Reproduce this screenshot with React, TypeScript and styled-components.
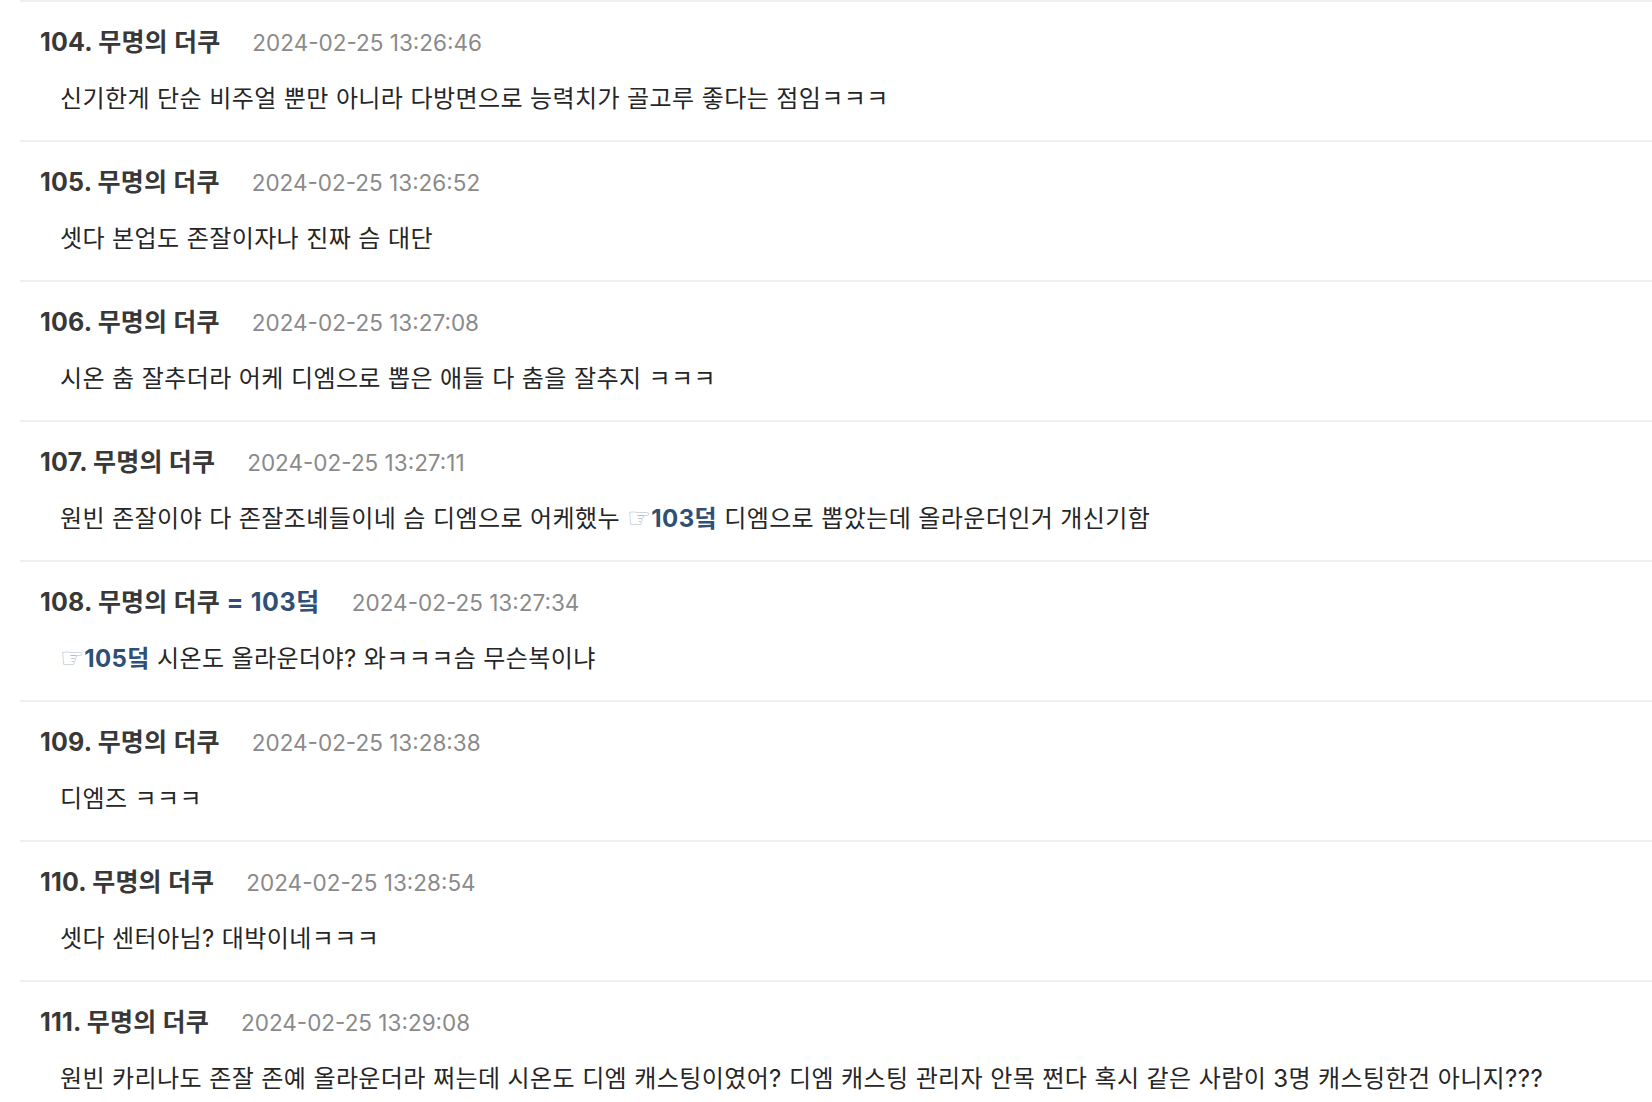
import React from "react";
import styled, { createGlobalStyle } from "styled-components";

const GlobalStyle = createGlobalStyle`
  html, body {
    margin: 0;
    padding: 0;
    background: #ffffff;
  }
  body {
    font-family: "Inter", "Noto Sans CJK KR", sans-serif;
    -webkit-font-smoothing: antialiased;
  }
`;

type Part = string | { ref: string };

interface Comment {
  no: number;
  author: string;
  replyTo?: string;
  time: string;
  body: Part[];
}

const COMMENTS: Comment[] = [
  {
    no: 104,
    author: "무명의 더쿠",
    time: "2024-02-25 13:26:46",
    body: ["신기한게 단순 비주얼 뿐만 아니라 다방면으로 능력치가 골고루 좋다는 점임ㅋㅋㅋ"],
  },
  {
    no: 105,
    author: "무명의 더쿠",
    time: "2024-02-25 13:26:52",
    body: ["셋다 본업도 존잘이자나 진짜 슴 대단"],
  },
  {
    no: 106,
    author: "무명의 더쿠",
    time: "2024-02-25 13:27:08",
    body: ["시온 춤 잘추더라 어케 디엠으로 뽑은 애들 다 춤을 잘추지 ㅋㅋㅋ"],
  },
  {
    no: 107,
    author: "무명의 더쿠",
    time: "2024-02-25 13:27:11",
    body: [
      "원빈 존잘이야 다 존잘조녜들이네 슴 디엠으로 어케했누 ",
      { ref: "103덬" },
      " 디엠으로 뽑았는데 올라운더인거 개신기함",
    ],
  },
  {
    no: 108,
    author: "무명의 더쿠",
    replyTo: "103덬",
    time: "2024-02-25 13:27:34",
    body: [{ ref: "105덬" }, " 시온도 올라운더야? 와ㅋㅋㅋ슴 무슨복이냐"],
  },
  {
    no: 109,
    author: "무명의 더쿠",
    time: "2024-02-25 13:28:38",
    body: ["디엠즈 ㅋㅋㅋ"],
  },
  {
    no: 110,
    author: "무명의 더쿠",
    time: "2024-02-25 13:28:54",
    body: ["셋다 센터아님? 대박이네ㅋㅋㅋ"],
  },
  {
    no: 111,
    author: "무명의 더쿠",
    time: "2024-02-25 13:29:08",
    body: [
      "원빈 카리나도 존잘 존예 올라운더라 쩌는데 시온도 디엠 캐스팅이였어? 디엠 캐스팅 관리자 안목 쩐다 혹시 같은 사람이 3명 캐스팅한건 아니지???",
    ],
  },
];

const List = styled.div`
  padding-left: 20px;
  border-top: 2px solid #efefef;
  margin-top: -2px;
`;

const Item = styled.div`
  border-top: 2px solid #efefef;
  padding: 24px 0 25px 20px;
  display: flex;
  flex-direction: column;
  gap: 25px;
`;

const Header = styled.div`
  display: flex;
  align-items: baseline;
  height: 32px;
  line-height: 32px;
`;

const Author = styled.span`
  font-size: 25px;
  font-weight: 700;
  letter-spacing: 0.2px;
  color: #383838;
  white-space: nowrap;
`;

const Reply = styled.span`
  color: #2f4f75;
  letter-spacing: 0.6px;
`;

const Time = styled.span`
  margin-left: 32px;
  font-size: 22.5px;
  font-weight: 400;
  color: #8a8a8a;
  white-space: nowrap;
`;

const Body = styled.div`
  height: 32px;
  padding-left: 20px;
  font-size: 24px;
  letter-spacing: 0.4px;
  line-height: 32px;
  color: #262626;
  white-space: nowrap;
`;

const Pointer = styled.span`
  font-family: "DejaVu Sans", sans-serif;
  font-size: 27px;
  letter-spacing: 0;
  line-height: 0;
  color: #aebbcc;
`;

const Ref = styled.span`
  font-weight: 700;
  color: #2f4f75;
`;

const renderPart = (part: Part, idx: number) => {
  if (typeof part === "string") return <React.Fragment key={idx}>{part}</React.Fragment>;
  return (
    <React.Fragment key={idx}>
      <Pointer>☞</Pointer>
      <Ref>{part.ref}</Ref>
    </React.Fragment>
  );
};

export default function App() {
  return (
    <>
      <GlobalStyle />
      <List>
        {COMMENTS.map((c) => (
          <Item key={c.no}>
            <Header>
              <Author>
                {c.no}. {c.author}
                {c.replyTo && <Reply> = {c.replyTo}</Reply>}
              </Author>
              <Time>{c.time}</Time>
            </Header>
            <Body>{c.body.map(renderPart)}</Body>
          </Item>
        ))}
      </List>
    </>
  );
}
